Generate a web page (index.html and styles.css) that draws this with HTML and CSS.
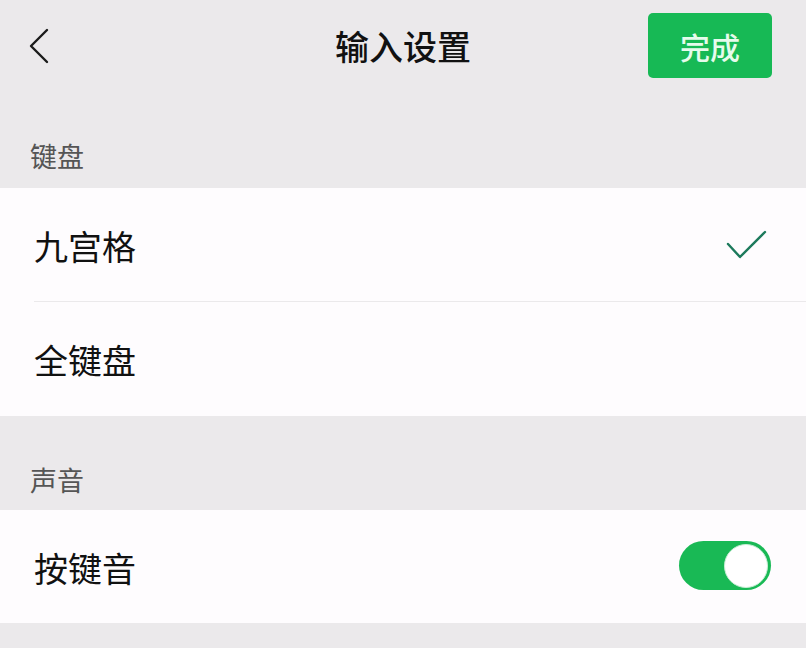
FILE: index.html
```html
<!DOCTYPE html>
<html lang="zh-CN">
<head>
<meta charset="utf-8">
<title>输入设置</title>
<link rel="stylesheet" href="styles.css">
</head>
<body>
<header class="nav">
  <button class="back" aria-label="返回">
    <svg width="24" height="36" viewBox="0 0 24 36"><polyline points="19,2 3,18 19,34" fill="none" stroke="#1a1a1a" stroke-width="2.4" stroke-linecap="round" stroke-linejoin="round"/></svg>
  </button>
  <h1 class="title">输入设置</h1>
  <button class="done">完成</button>
</header>

<div class="section-title">键盘</div>
<div class="card">
  <div class="row">
    <span class="label">九宫格</span>
    <svg class="check" width="42" height="30" viewBox="0 0 42 30"><polyline points="2,14 14,27 39,2" fill="none" stroke="#1d7a5c" stroke-width="2.4" stroke-linecap="round" stroke-linejoin="round"/></svg>
  </div>
  <div class="row">
    <span class="label">全键盘</span>
  </div>
</div>

<div class="section-title second">声音</div>
<div class="card">
  <div class="row short">
    <span class="label">按键音</span>
    <span class="toggle"><span class="knob"></span></span>
  </div>
</div>
</body>
</html>
```

FILE: styles.css
```css
* { box-sizing: border-box; }
html, body { margin: 0; padding: 0; }
body {
  background: #ebe9eb;
  font-family: "Noto Sans CJK SC", "Noto Sans", sans-serif;
  color: #111;
  width: 806px;
  height: 648px;
  overflow: hidden;
}
.nav {
  height: 92px;
  display: grid;
  grid-template-columns: 1fr auto 1fr;
  align-items: center;
}
.back {
  justify-self: start;
  margin-left: 28px;
  padding: 0;
  border: 0;
  background: none;
  display: flex;
  height: 36px;
}
.title {
  margin: 0;
  font-size: 34px;
  font-weight: 500;
  line-height: 40px;
  color: #111;
}
.done {
  justify-self: end;
  margin-right: 34px;
  margin-top: -1px;
  width: 124px;
  height: 65px;
  border: 0;
  border-radius: 5px;
  background: #17b955;
  color: #e6fbec;
  font-family: "Noto Sans CJK SC", "Noto Sans", sans-serif;
  font-size: 30px;
  font-weight: 500;
  padding: 0;
}
.section-title {
  padding: 50px 0 18px 30px;
  font-size: 27px;
  line-height: 28px;
  color: #555;
}
.section-title.second { padding-bottom: 16px; }
.card {
  background: #fefcfe;
  padding-left: 34px;
}
.row {
  height: 114px;
  display: flex;
  align-items: center;
  justify-content: space-between;
  border-bottom: 1px solid #ebe9eb;
  padding-right: 38px;
}
.row:last-child { border-bottom: 0; }
.row.short { height: 113px; padding-right: 35px; }
.label {
  font-size: 34px;
  line-height: 40px;
  color: #111;
  margin-top: 2px;
}
.check { margin-top: 1px; }
.toggle {
  width: 92px;
  height: 49px;
  border-radius: 25px;
  background: #19b955;
  display: flex;
  align-items: center;
  justify-content: flex-end;
  padding-right: 3px;
  margin-top: -2px;
}
.knob {
  width: 44px;
  height: 44px;
  border-radius: 50%;
  background: #ffffff;
  border: 1px solid #c9eed6;
}
```
